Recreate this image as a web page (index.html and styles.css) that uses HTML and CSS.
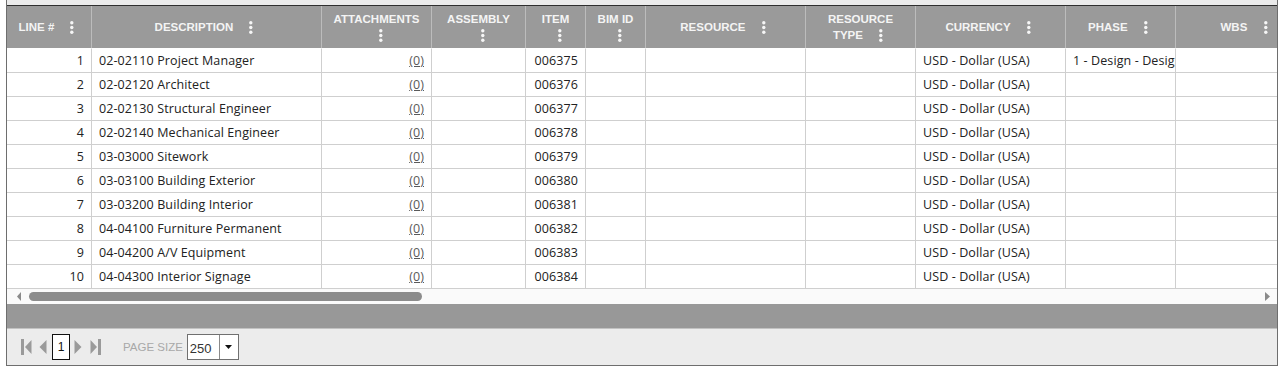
FILE: index.html
```html
<!DOCTYPE html>
<html lang="en">
<head>
<meta charset="utf-8">
<title>Lines grid</title>
<link rel="stylesheet" href="styles.css">
</head>
<body>
<div class="wrap">
  <div class="grid">
    <div class="tbl">
      <div class="hc"><span class="ht">LINE # <svg class="dots" viewBox="0 0 9 13" width="9" height="13"><circle cx="1.8" cy="1.8" r="1.7"/><circle cx="1.8" cy="6.5" r="1.7"/><circle cx="1.8" cy="11.2" r="1.7"/></svg></span></div>
      <div class="hc"><span class="ht">DESCRIPTION <svg class="dots" viewBox="0 0 9 13" width="9" height="13"><circle cx="1.8" cy="1.8" r="1.7"/><circle cx="1.8" cy="6.5" r="1.7"/><circle cx="1.8" cy="11.2" r="1.7"/></svg></span></div>
      <div class="hc"><span class="ht">ATTACHMENTS <svg class="dots" viewBox="0 0 9 13" width="9" height="13"><circle cx="1.8" cy="1.8" r="1.7"/><circle cx="1.8" cy="6.5" r="1.7"/><circle cx="1.8" cy="11.2" r="1.7"/></svg></span></div>
      <div class="hc"><span class="ht">ASSEMBLY <svg class="dots" viewBox="0 0 9 13" width="9" height="13"><circle cx="1.8" cy="1.8" r="1.7"/><circle cx="1.8" cy="6.5" r="1.7"/><circle cx="1.8" cy="11.2" r="1.7"/></svg></span></div>
      <div class="hc"><span class="ht">ITEM <svg class="dots" viewBox="0 0 9 13" width="9" height="13"><circle cx="1.8" cy="1.8" r="1.7"/><circle cx="1.8" cy="6.5" r="1.7"/><circle cx="1.8" cy="11.2" r="1.7"/></svg></span></div>
      <div class="hc"><span class="ht">BIM ID <svg class="dots" viewBox="0 0 9 13" width="9" height="13"><circle cx="1.8" cy="1.8" r="1.7"/><circle cx="1.8" cy="6.5" r="1.7"/><circle cx="1.8" cy="11.2" r="1.7"/></svg></span></div>
      <div class="hc"><span class="ht">RESOURCE <svg class="dots" viewBox="0 0 9 13" width="9" height="13"><circle cx="1.8" cy="1.8" r="1.7"/><circle cx="1.8" cy="6.5" r="1.7"/><circle cx="1.8" cy="11.2" r="1.7"/></svg></span></div>
      <div class="hc"><span class="ht">RESOURCE TYPE <svg class="dots" viewBox="0 0 9 13" width="9" height="13"><circle cx="1.8" cy="1.8" r="1.7"/><circle cx="1.8" cy="6.5" r="1.7"/><circle cx="1.8" cy="11.2" r="1.7"/></svg></span></div>
      <div class="hc"><span class="ht">CURRENCY <svg class="dots" viewBox="0 0 9 13" width="9" height="13"><circle cx="1.8" cy="1.8" r="1.7"/><circle cx="1.8" cy="6.5" r="1.7"/><circle cx="1.8" cy="11.2" r="1.7"/></svg></span></div>
      <div class="hc"><span class="ht">PHASE <svg class="dots" viewBox="0 0 9 13" width="9" height="13"><circle cx="1.8" cy="1.8" r="1.7"/><circle cx="1.8" cy="6.5" r="1.7"/><circle cx="1.8" cy="11.2" r="1.7"/></svg></span></div>
      <div class="hc"><span class="ht">WBS <svg class="dots" viewBox="0 0 9 13" width="9" height="13"><circle cx="1.8" cy="1.8" r="1.7"/><circle cx="1.8" cy="6.5" r="1.7"/><circle cx="1.8" cy="11.2" r="1.7"/></svg></span></div>

      <div class="c r first">1</div><div class="c first">02-02110 Project Manager</div><div class="c r first"><a class="att">(0)</a></div><div class="c first"></div><div class="c r first">006375</div><div class="c first"></div><div class="c first"></div><div class="c first"></div><div class="c first">USD - Dollar (USA)</div><div class="c first">1 - Design - Design Phase</div><div class="c first"></div>
      <div class="c r">2</div><div class="c">02-02120 Architect</div><div class="c r"><a class="att">(0)</a></div><div class="c"></div><div class="c r">006376</div><div class="c"></div><div class="c"></div><div class="c"></div><div class="c">USD - Dollar (USA)</div><div class="c"></div><div class="c"></div>
      <div class="c r">3</div><div class="c">02-02130 Structural Engineer</div><div class="c r"><a class="att">(0)</a></div><div class="c"></div><div class="c r">006377</div><div class="c"></div><div class="c"></div><div class="c"></div><div class="c">USD - Dollar (USA)</div><div class="c"></div><div class="c"></div>
      <div class="c r">4</div><div class="c">02-02140 Mechanical Engineer</div><div class="c r"><a class="att">(0)</a></div><div class="c"></div><div class="c r">006378</div><div class="c"></div><div class="c"></div><div class="c"></div><div class="c">USD - Dollar (USA)</div><div class="c"></div><div class="c"></div>
      <div class="c r">5</div><div class="c">03-03000 Sitework</div><div class="c r"><a class="att">(0)</a></div><div class="c"></div><div class="c r">006379</div><div class="c"></div><div class="c"></div><div class="c"></div><div class="c">USD - Dollar (USA)</div><div class="c"></div><div class="c"></div>
      <div class="c r">6</div><div class="c">03-03100 Building Exterior</div><div class="c r"><a class="att">(0)</a></div><div class="c"></div><div class="c r">006380</div><div class="c"></div><div class="c"></div><div class="c"></div><div class="c">USD - Dollar (USA)</div><div class="c"></div><div class="c"></div>
      <div class="c r">7</div><div class="c">03-03200 Building Interior</div><div class="c r"><a class="att">(0)</a></div><div class="c"></div><div class="c r">006381</div><div class="c"></div><div class="c"></div><div class="c"></div><div class="c">USD - Dollar (USA)</div><div class="c"></div><div class="c"></div>
      <div class="c r">8</div><div class="c">04-04100 Furniture Permanent</div><div class="c r"><a class="att">(0)</a></div><div class="c"></div><div class="c r">006382</div><div class="c"></div><div class="c"></div><div class="c"></div><div class="c">USD - Dollar (USA)</div><div class="c"></div><div class="c"></div>
      <div class="c r">9</div><div class="c">04-04200 A/V Equipment</div><div class="c r"><a class="att">(0)</a></div><div class="c"></div><div class="c r">006383</div><div class="c"></div><div class="c"></div><div class="c"></div><div class="c">USD - Dollar (USA)</div><div class="c"></div><div class="c"></div>
      <div class="c r">10</div><div class="c">04-04300 Interior Signage</div><div class="c r"><a class="att">(0)</a></div><div class="c"></div><div class="c r">006384</div><div class="c"></div><div class="c"></div><div class="c"></div><div class="c">USD - Dollar (USA)</div><div class="c"></div><div class="c"></div>
    </div>
  </div>
  <div class="hscroll">
    <svg class="sarrow left" viewBox="0 0 4 9" width="4" height="9"><polygon points="4,0 0,4.5 4,9"/></svg>
    <div class="thumb"></div>
    <svg class="sarrow right" viewBox="0 0 5 9" width="5" height="9"><polygon points="0,0 5,4.5 0,9"/></svg>
  </div>
  <div class="band"></div>
  <div class="pager">
    <svg class="pico first-ic" viewBox="0 0 11 16" width="11" height="16"><rect x="0" y="0" width="3" height="16"/><polygon points="10.5,1 4,8 10.5,15"/></svg>
    <svg class="pico prev-ic" viewBox="0 0 8 16" width="8" height="16"><polygon points="7.5,1 0.5,8 7.5,15"/></svg>
    <div class="pagebox">1</div>
    <svg class="pico next-ic" viewBox="0 0 8 16" width="8" height="16"><polygon points="0.5,1 7.5,8 0.5,15"/></svg>
    <svg class="pico last-ic" viewBox="0 0 11 16" width="11" height="16"><polygon points="0.5,1 7,8 0.5,15"/><rect x="8" y="0" width="3" height="16"/></svg>
    <span class="pslabel">PAGE SIZE</span>
    <div class="psel">
      <span class="psval">250</span>
      <span class="psbtn"><svg viewBox="0 0 7 4" width="7" height="4"><polygon points="0,0 7,0 3.5,4"/></svg></span>
    </div>
  </div>
</div>
</body>
</html>
```
FILE: styles.css
```css
* { box-sizing: border-box; }

html, body {
  margin: 0;
  padding: 0;
  background: #ffffff;
}

.wrap {
  margin-left: 6px;
  width: 1272px;
  border: 1px solid #6e6e6e;
  border-top: none;
  background: #ebebeb;
  padding-top: 5px;
}

.grid {
  border-top: 1px solid #2e2e2e;
  overflow: hidden;
  background: #ffffff;
}

.tbl {
  display: grid;
  grid-template-columns: 85px 230px 110px 94px 60px 60px 160px 110px 150px 110px 142px;
  grid-template-rows: 42px 25px repeat(9, 24px);
  width: max-content;
}

.hc {
  background: #9a9a9a;
  border-right: 1px solid #bcbcbc;
  display: flex;
  align-items: center;
  justify-content: center;
  padding: 0 8px;
  text-align: center;
  font-family: "Liberation Sans", Arial, sans-serif;
  font-weight: bold;
  font-size: 11.5px;
  line-height: 16px;
  color: #f4f4f4;
}

.hc .dots {
  margin-left: 13px;
  vertical-align: -3px;
  fill: #f6f6f6;
}

.c {
  border-right: 1px solid #cfcfcf;
  border-bottom: 1px solid #cfcfcf;
  padding: 0 7px;
  font-family: "Open Sans", "Noto Sans", sans-serif;
  font-size: 12.5px;
  letter-spacing: 0.1px;
  line-height: 23px;
  color: #222222;
  white-space: nowrap;
  overflow: hidden;
}

.c.first {
  border-top: 1px solid #ffffff;
}

.c.r { text-align: right; }

.att {
  color: #5a5a5a;
  text-decoration: underline;
}

.hscroll {
  height: 15px;
  background: #fafafa;
  display: flex;
  align-items: center;
}

.sarrow { fill: #8a8a8a; display: block; }
.sarrow.left { margin-left: 10px; }
.sarrow.right { margin-left: auto; margin-right: 7px; }

.thumb {
  margin-left: 8px;
  width: 393px;
  height: 9px;
  border-radius: 5px;
  background: #8c8c8c;
}

.band {
  height: 25px;
  background: #989898;
  border-bottom: 1px solid #c2c2c2;
}

.pager {
  height: 36px;
  display: flex;
  align-items: center;
  background: #ececec;
  font-family: "Liberation Sans", Arial, sans-serif;
}

.pico { display: block; fill: #9a9a9a; }
.first-ic { margin-left: 14px; }
.prev-ic { margin-left: 7px; }
.next-ic { margin-left: 4px; }
.last-ic { margin-left: 8px; }

.pagebox {
  margin-left: 5px;
  width: 18px;
  height: 26px;
  border: 1px solid #111111;
  background: #ffffff;
  font-size: 12px;
  line-height: 24px;
  text-align: center;
  color: #111111;
}

.pslabel {
  margin-left: 22px;
  font-size: 11.5px;
  color: #a8a8a8;
}

.psel {
  margin-left: 4px;
  width: 52px;
  height: 26px;
  border: 1px solid #707070;
  background: #ffffff;
  display: flex;
}

.psval {
  width: 32px;
  border-right: 1px solid #8a8a8a;
  padding: 4px 0 0 2px;
  font-size: 13px;
  line-height: 20px;
  color: #333333;
}

.psbtn {
  flex: 1;
  display: flex;
  align-items: center;
  justify-content: center;
}

.psbtn svg { display: block; fill: #111111; }
```
